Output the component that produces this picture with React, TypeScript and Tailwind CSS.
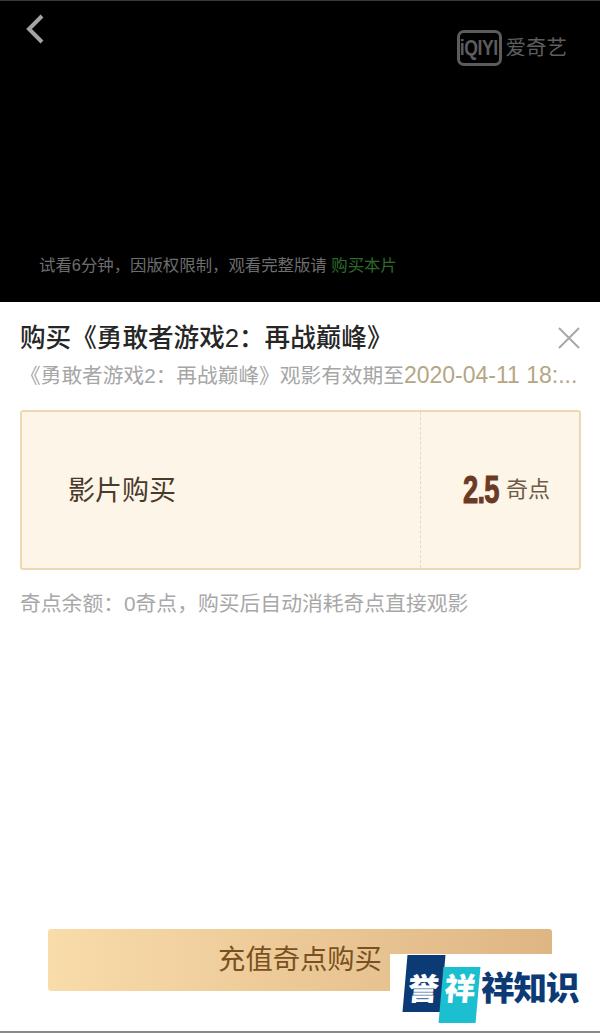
const cjk = "font-['Liberation_Sans','Noto_Sans_CJK_SC',sans-serif]";

function IqiyiLogo() {
  return (
    <div className="flex items-center gap-[4px]">
      <div className="flex h-[36px] w-[45px] items-center justify-center rounded-[7px] border-[3px] border-[#5c5c5c]">
        <span className="font-['Liberation_Sans',sans-serif] text-[22px] font-bold leading-none tracking-[-0.5px] text-[#5c5c5c] [transform:scaleX(0.8)]">iQIYI</span>
      </div>
      <span className="text-[20.5px] leading-none text-[#5e5e5e]">爱奇艺</span>
    </div>
  );
}

export default function App() {
  return (
    <div className={`relative flex h-[1033px] w-[600px] flex-col overflow-hidden bg-white ${cjk}`}>
      {/* video */}
      <div className="flex h-[302px] shrink-0 flex-col border-t border-[#3a3a3a] bg-black">
        <div className="flex items-start justify-between pl-[24px] pr-[33px] pt-[12px]">
          <svg width="22" height="32" viewBox="0 0 22 32" fill="none">
            <path d="M18 3 L5 16 L18 29" stroke="#a3a3a3" strokeWidth="4" />
          </svg>
          <div className="mt-[17px]">
            <IqiyiLogo />
          </div>
        </div>
        <div className="mt-auto pb-[27px] pl-[39px] text-[16.4px] leading-[20px] text-[#6e6e6e]">
          试看6分钟，因版权限制，观看完整版请 <span className="text-[#2c6a2c]">购买本片</span>
        </div>
      </div>

      {/* purchase panel */}
      <div className="flex flex-1 flex-col px-[20px]">
        <div className="mt-[20px] flex items-center justify-between">
          <h1 className="text-[25.6px] font-medium leading-[32px] text-[#262626]">购买《勇敢者游戏2：再战巅峰》</h1>
          <svg className="-mr-[1px]" width="24" height="24" viewBox="0 0 24 24" fill="none">
            <path d="M2 2 L22 22 M22 2 L2 22" stroke="#a8a8a8" strokeWidth="2" />
          </svg>
        </div>
        <p className="mt-[6px] whitespace-nowrap text-[20.7px] leading-[30px] text-[#a6a6a6]">
          《勇敢者游戏2：再战巅峰》观影有效期至<span className="text-[23px] text-[#b5a685]">2020-04-11 18:...</span>
        </p>

        <div className="mt-[19px] flex h-[160px] w-[561px] rounded-[3px] border-2 border-[#ecd9b4] bg-[#fdf5e7]">
          <div className="flex flex-1 items-center pl-[46px] pt-[3px] text-[27px] text-[#4a3a2c]">影片购买</div>
          <div className="flex w-[159px] items-center justify-end gap-[6px] border-l border-dashed border-[#e6d8c4] pr-[29px]">
            <span className="-ml-[16px] -mr-[1px] origin-right font-['Liberation_Sans',sans-serif] text-[38px] font-bold leading-none tracking-[-1px] text-[#6b3a24] [-webkit-text-stroke:1px_#6b3a24] [transform:translateX(-2px)_scaleX(0.72)]">2.5</span>
            <span className="text-[22px] leading-none text-[#6e5a48]">奇点</span>
          </div>
        </div>

        <p className="mt-[20px] text-[20.8px] leading-[28px] text-[#a8a8a8]">奇点余额：0奇点，购买后自动消耗奇点直接观影</p>

        <div className="mt-auto mb-[40px] flex justify-center">
          <button className="flex h-[62px] w-[504px] items-center justify-center rounded-[3px] bg-gradient-to-r from-[#f8dcaa] to-[#deb684] text-[27.3px] text-[#7a5020]">
            充值奇点购买
          </button>
        </div>
      </div>
      <div className="h-[2px] shrink-0 bg-[#8a8a8a]" />

      {/* watermark */}
      <div className="absolute bottom-[2px] right-0 flex h-[77px] w-[210px] items-start bg-white pl-[15px] pt-[1px]">
        <div className="relative h-[68px] w-[76px] shrink-0">
          <div className="absolute left-0 top-0 flex h-[57px] w-[38px] items-center justify-center bg-[#0b3a75] pt-[11px] text-[31px] font-black leading-none text-white [transform:skewX(-5deg)]">誉</div>
          <div className="absolute bottom-0 left-[36px] flex h-[56px] w-[37px] items-center justify-center bg-[#1cbfd0] pb-[11px] text-[31px] font-black leading-none text-white [transform:skewX(-5deg)]">祥</div>
        </div>
        <span className="mt-[17px] text-[33.5px] font-black leading-none tracking-[-1px] text-[#0b3a75]">祥知识</span>
      </div>
    </div>
  );
}
